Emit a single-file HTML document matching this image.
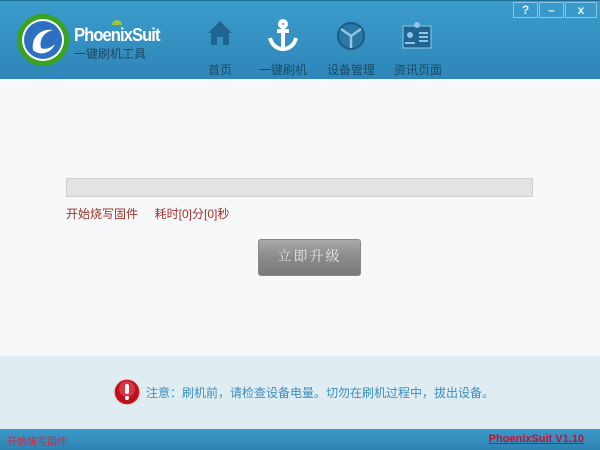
<!DOCTYPE html>
<html><head><meta charset="utf-8"><style>
*{margin:0;padding:0;box-sizing:border-box}
body{width:600px;height:450px;overflow:hidden;font-family:"Liberation Sans","Noto Sans CJK SC",sans-serif;background:#f5f7f9;position:relative}
.hdr{position:absolute;left:0;top:0;width:600px;height:79px;background:linear-gradient(#3b9ccb,#2f86b8);border-top:1px solid #1d6c99}
.nav{position:absolute;top:60px;font-size:12px;color:#1c4a66;}
.body{position:absolute;left:0;top:79px;width:600px;height:277px;background:#f6f8fa}
.note{position:absolute;left:0;top:356px;width:600px;height:73px;background:#dfecf2}
.ftr{position:absolute;left:0;top:429px;width:600px;height:21px;background:linear-gradient(#3a98c8,#2e84b4)}
.btn{position:absolute;top:1px;width:25px;height:16px;border:1px solid #8cc3e0;color:#e8f4fb;font-size:12px;text-align:center;line-height:14px;font-weight:bold}
</style></head><body>
<div class="hdr">
<svg style="position:absolute;left:15px;top:11px" width="56" height="56" viewBox="0 0 56 56">
<circle cx="28" cy="28" r="26" fill="#3aa31e"/><circle cx="28" cy="28" r="21" fill="#fff"/>
<circle cx="28" cy="28" r="19" fill="#2d6fc0"/>
<path d="M18 38 C16 25 26 16 38 18 C30 20 24 26 26 36 C30 38 36 36 40 32 C36 42 24 44 18 38Z" fill="#fff"/>
</svg>
<div style="position:absolute;left:74px;top:24px;color:#fff;font-weight:bold;font-size:18px;letter-spacing:-1px;transform:scaleX(0.92);transform-origin:left">PhoenixSuit</div>
<div style="position:absolute;left:112px;top:19px;width:10px;height:5px;background:#9c3;border-radius:5px 5px 0 0"></div>
<div style="position:absolute;left:74px;top:44px;color:#1d4a66;font-size:12px">一键刷机工具</div>
<svg style="position:absolute;left:207px;top:18px" width="26" height="28"><path d="M13 2 L25 14 L22 14 L22 26 L16 26 L16 18 L10 18 L10 26 L4 26 L4 14 L1 14Z" fill="#1e6593"/></svg>
<svg style="position:absolute;left:266px;top:17px" width="34" height="34" fill="none" stroke="#fff" stroke-width="4"><circle cx="17" cy="6" r="3"/><path d="M17 9 V30 M11 13 H23 M4 20 C6 28 12 31 17 31 C22 31 28 28 30 20"/></svg>
<svg style="position:absolute;left:336px;top:20px" width="30" height="30"><circle cx="15" cy="15" r="13" fill="#2a77a6" stroke="#1b5c85" stroke-width="2"/><path d="M15 15 V27 M15 15 L5 8 M15 15 L25 8" stroke="#8fc6e3" stroke-width="2.5"/></svg>
<svg style="position:absolute;left:402px;top:20px" width="30" height="28"><rect x="1" y="5" width="28" height="22" fill="#1e6593" stroke="#8fc6e3"/><circle cx="15" cy="4" r="3" fill="#8fc6e3"/><circle cx="8" cy="14" r="3" fill="#8fc6e3"/><path d="M3 22 h10 M17 12 h9 M17 16 h9 M17 20 h9" stroke="#8fc6e3" stroke-width="2"/></svg>
<div class="nav" style="left:208px">首页</div>
<div class="nav" style="left:259px">一键刷机</div>
<div class="nav" style="left:327px">设备管理</div>
<div class="nav" style="left:394px">资讯页面</div>
<div class="btn" style="left:513px">?</div><div class="btn" style="left:539px">–</div><div class="btn" style="left:565px;width:32px">x</div>
</div>
<div class="body">
<div style="position:absolute;left:66px;top:99px;width:467px;height:19px;background:#e4e4e4;border:1px solid #d0d0d0"></div>
<div style="position:absolute;left:66px;top:126px;font-size:12px;color:#a0312a">开始烧写固件 &nbsp; &nbsp; 耗时[0]分[0]秒</div>
<div style="position:absolute;left:258px;top:160px;width:103px;height:37px;border-radius:3px;background:linear-gradient(#aaa,#8a8a8a 50%,#7a7a7a);border:1px solid #888;color:#e6e6e6;font-size:14px;text-align:center;line-height:35px;font-family:'Liberation Serif','Noto Serif CJK SC',serif;letter-spacing:2px">立即升级</div>
</div>
<div class="note">
<svg style="position:absolute;left:113px;top:22px" width="28" height="28"><circle cx="14" cy="14" r="13" fill="#c0101a" stroke="#ddd" stroke-width="1.5"/><circle cx="14" cy="11" r="8" fill="#e86070" opacity=".5"/><rect x="12" y="6" width="4" height="10" rx="2" fill="#fff"/><circle cx="14" cy="20" r="2" fill="#fff"/></svg>
<div style="position:absolute;left:146px;top:28px;font-size:12px;color:#3d8ec0">注意：刷机前，请检查设备电量。切勿在刷机过程中，拔出设备。</div>
</div>
<div class="ftr">
<div style="position:absolute;left:7px;top:4px;font-size:10px;color:#e0203a">开始烧写固件</div>
<div style="position:absolute;right:16px;top:4px;font-size:11px;font-weight:bold;color:#c8102e;text-decoration:underline">PhoenixSuit V1.10</div>
</div>
</body></html>
